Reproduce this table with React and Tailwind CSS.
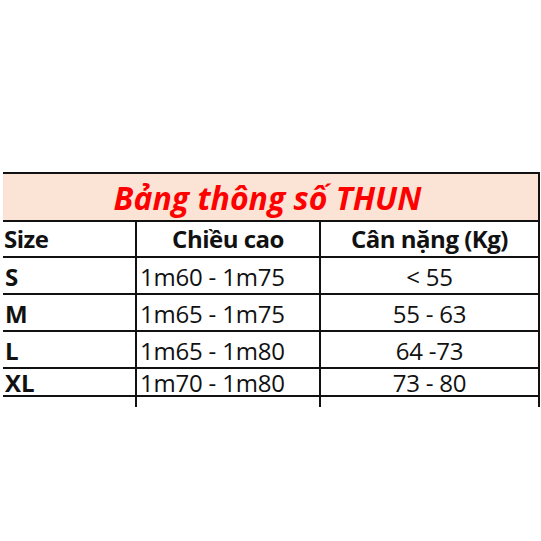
import React from "react";

const rows = [
  { size: "S", height: "1m60 - 1m75", weight: "< 55" },
  { size: "M", height: "1m65 - 1m75", weight: "55 - 63" },
  { size: "L", height: "1m65 - 1m80", weight: "64 -73" },
  { size: "XL", height: "1m70 - 1m80", weight: "73 - 80" },
];

const App = () => {
  return (
    <div
      className="w-[541px] h-[541px] bg-white pt-[172px] overflow-hidden"
      style={{ fontFamily: '"Open Sans", sans-serif' }}
    >
      <div className="ml-[3px] w-[537px] border-t-2 border-r-2 border-[#111]">
        <div className="h-[48px] bg-[#fbe4d5] border-b-2 border-[#111] flex items-center justify-center">
          <h1 className="text-[32px] leading-none font-bold italic text-[#f00] pr-[6px] pt-[1px]">
            Bảng thông số THUN
          </h1>
        </div>
        <div className="grid grid-cols-[132px_184px_1fr] text-[24px] leading-none text-[#111]">
          <div className="h-[36px] border-b-2 border-[#111] flex items-center pl-[1px] font-bold tracking-[-0.5px]">
            Size
          </div>
          <div className="h-[36px] border-b-2 border-l-2 border-[#111] flex items-center justify-center font-bold tracking-[-0.5px]">
            Chiều cao
          </div>
          <div className="h-[36px] border-b-2 border-l-2 border-[#111] flex items-center justify-center font-bold tracking-[-0.5px]">
            Cân nặng (Kg)
          </div>
          {rows.map((r, i) => (
            <React.Fragment key={r.size}>
              <div
                className={`${i === 3 ? "h-[28px]" : "h-[37px]"} border-b-2 border-[#111] flex items-center pl-[2px] pt-[2px] font-bold`}
              >
                {r.size}
              </div>
              <div
                className={`${i === 3 ? "h-[28px]" : "h-[37px]"} border-b-2 border-l-2 border-[#111] flex items-center pl-[3px] pt-[2px] tracking-[-0.2px]`}
              >
                {r.height}
              </div>
              <div
                className={`${i === 3 ? "h-[28px]" : "h-[37px]"} border-b-2 border-l-2 border-[#111] flex items-center justify-center pt-[2px] tracking-[-0.2px]`}
              >
                {r.weight}
              </div>
            </React.Fragment>
          ))}
          <div className="h-[10px]"></div>
          <div className="h-[10px] border-l-2 border-[#111]"></div>
          <div className="h-[10px] border-l-2 border-[#111]"></div>
        </div>
      </div>
    </div>
  );
};

export default App;
